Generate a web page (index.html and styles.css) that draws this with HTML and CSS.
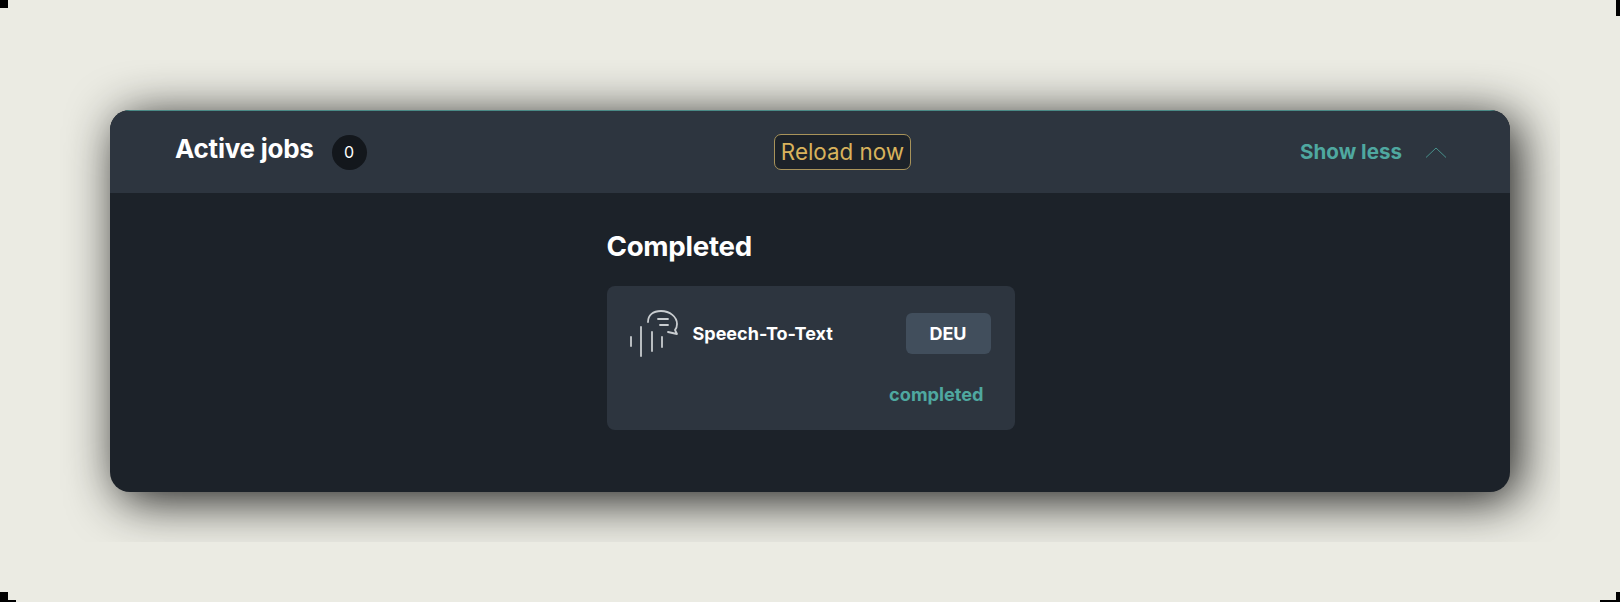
FILE: index.html
```html
<!DOCTYPE html>
<html lang="en">
<head>
  <meta charset="UTF-8">
  <meta name="viewport" content="width=device-width, initial-scale=1.0">
  <title>Active jobs</title>
  <link rel="stylesheet" href="styles.css">
</head>
<body>
  <span class="corner corner-tl"></span>
  <span class="corner corner-tr"></span>
  <span class="corner corner-bl"></span>
  <span class="corner corner-br"></span>

  <div class="stage">
    <section class="panel">
      <header class="panel-head">
        <div class="head-left">
          <h2 class="head-title">Active jobs</h2>
          <span class="count">0</span>
        </div>
        <button class="reload-btn">Reload now</button>
        <div class="head-right">
          <span class="toggle-label">Show less</span>
          <svg class="chevron" width="22" height="12" viewBox="0 0 22 12" fill="none" stroke="#4fa8a0" stroke-width="0.8">
            <path d="M1 11.5 L11 2 L21 11.5"/>
          </svg>
        </div>
      </header>

      <div class="panel-body">
        <div class="column">
          <h3 class="section-title">Completed</h3>
          <div class="job-card">
            <div class="job-row">
              <svg class="job-icon" width="50" height="50" viewBox="0 0 50 50" fill="none" stroke="#c9cdd0" stroke-width="1.8" stroke-linecap="round" stroke-linejoin="round">
                <path d="M2 29 V38"/>
                <path d="M12 19 V48"/>
                <path d="M23 24 V43"/>
                <path d="M33 29 V39"/>
                <path d="M19 14 C19 7 24 3 32 3 C41 3 48 9 48 16 C48 19 47 21 46 22 L48 26 L39 24"/>
                <path d="M29 11 H39"/>
                <path d="M31 17 H39"/>
              </svg>
              <span class="job-name">Speech-To-Text</span>
              <span class="lang-tag">DEU</span>
            </div>
            <div class="job-status">completed</div>
          </div>
        </div>
      </div>
    </section>
  </div>
</body>
</html>
```

FILE: styles.css
```css
html, body {
  margin: 0;
  padding: 0;
}

body {
  width: 1620px;
  height: 602px;
  overflow: hidden;
  background-color: #ebebe3;
  font-family: Inter, "Liberation Sans", sans-serif;
  position: relative;
}

.corner {
  position: absolute;
  background-color: #000;
}

.corner-tl { left: 0; top: 0; width: 8px; height: 8px; }
.corner-tr { right: 0; top: 0; width: 4px; height: 16px; }
.corner-bl { left: 0; bottom: 0; width: 8px; height: 10px; }
.corner-br { right: 0; bottom: 0; width: 4px; height: 10px; }

.corner-bl::after,
.corner-br::after {
  content: "";
  position: absolute;
  bottom: 0;
  height: 2px;
  background-color: #000;
}

.corner-bl::after { left: 8px; width: 8px; }
.corner-br::after { right: 4px; width: 16px; }

/* clips the shadow, the reference shows a hard edge around it */
.stage {
  width: 1500px;
  height: 482px;
  margin: 60px 0 0 60px;
  padding: 50px;
  box-sizing: border-box;
  overflow: hidden;
}

.panel {
  height: 382px;
  border-radius: 20px;
  overflow: hidden;
  background-color: #1c2229;
  box-shadow: 8px 8px 50px rgba(0, 0, 0, 0.9);
}

.panel-head {
  height: 83px;
  box-sizing: border-box;
  padding: 0 63px 0 65px;
  background-color: #2d353f;
  border-top: 1px solid #4a8a86;
  display: grid;
  grid-template-columns: 1fr auto 1fr;
  align-items: center;
}

.head-left {
  display: flex;
  align-items: center;
  gap: 18px;
}

.head-title {
  margin: 0 0 7px;
  font-size: 26px;
  font-weight: 700;
  color: #fff;
  letter-spacing: -0.25px;
}

.count {
  width: 35px;
  height: 35px;
  border-radius: 50%;
  background-color: #13171c;
  color: #fff;
  font-size: 16px;
  display: flex;
  justify-content: center;
  align-items: center;
}

.reload-btn {
  height: 36px;
  margin-left: 63px;
  padding: 0 6px 2px;
  font-family: inherit;
  font-size: 22.4px;
  color: #d8b25c;
  background-color: #1c2229;
  border: 1px solid #a8935a;
  border-radius: 7px;
}

.head-right {
  display: flex;
  justify-content: flex-end;
  align-items: center;
  gap: 23px;
}

.toggle-label {
  margin-bottom: 2px;
  font-size: 20.6px;
  font-weight: 700;
  color: #4fa8a0;
}

.chevron {
  margin-bottom: 1px;
}

.panel-body {
  display: flex;
  justify-content: center;
}

.column {
  width: 408px;
  margin-left: 1px;
  padding-top: 36px;
}

.section-title {
  margin: 0 0 23px;
  font-size: 27.7px;
  font-weight: 700;
  color: #fff;
  letter-spacing: -0.3px;
}

.job-card {
  height: 144px;
  box-sizing: border-box;
  padding: 22px 24px 0 22px;
  background-color: #2d353f;
  border-radius: 8px;
}

.job-row {
  display: flex;
  align-items: center;
}

.job-name {
  margin-left: 14px;
  font-size: 18px;
  font-weight: 700;
  color: #fff;
}

.lang-tag {
  margin-left: auto;
  width: 85px;
  height: 41px;
  border-radius: 6px;
  background-color: #414e5c;
  color: #fff;
  font-size: 18px;
  font-weight: 700;
  display: flex;
  justify-content: center;
  align-items: center;
}

.job-status {
  margin-top: 25px;
  padding-right: 7px;
  text-align: right;
  font-size: 18.2px;
  font-weight: 700;
  color: #4fa8a0;
}
```
